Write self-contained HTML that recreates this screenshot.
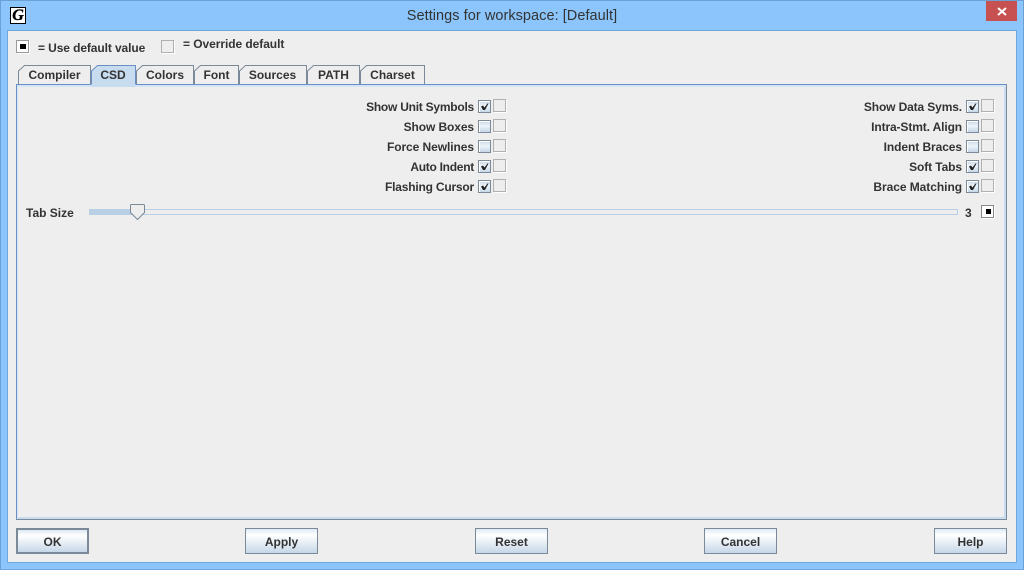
<!DOCTYPE html>
<html><head><meta charset="utf-8"><style>
html,body{margin:0;padding:0}
body{width:1024px;height:570px;position:relative;overflow:hidden;background:#8bc5fb;font:bold 12px "Liberation Sans",sans-serif;color:#333}
div,span{position:absolute;box-sizing:border-box}
.t{white-space:nowrap;line-height:14px;height:14px}
.r{text-align:right;width:200px}
.cb{width:13px;height:13px;border:1px solid #7a8a99;background:linear-gradient(#c6d7e8,#eef3f9 45%,#c6d7e8);box-shadow:inset 1px 1px 0 #fff}
.ov{width:13px;height:13px;border:1px solid #b0b0b0;background:#eee;box-shadow:1px 1px 0 #fff}
.tab{top:65px;height:20px;text-align:center;line-height:20px}
.btn{top:528px;width:73px;height:26px;border:1px solid #7a8a99;background:linear-gradient(#dde8f3,#fff 25%,#c6d7e8);text-align:center;line-height:26px}
</style></head><body>
<div style="left:0;top:0;width:1024px;height:570px;border:1px solid #6c9fd4;border-bottom-color:#6fa8e0"></div>
<div style="left:10px;top:7px;width:16px;height:17px;background:#fff;border:1px solid #000;font:bold italic 16px/15px 'Liberation Serif',serif;color:#000;text-align:center;-webkit-text-stroke:.4px #000">G</div>
<div class="t" style="left:0;width:1024px;top:8px;height:16px;line-height:16px;text-align:center;font-weight:normal;font-size:14.5px;letter-spacing:.05px;color:#333">Settings for workspace: [Default]</div>
<div style="left:986px;top:1px;width:31px;height:20px;background:#c75050"><svg width="31" height="20" style="display:block"><path d="M12 7L20 14M20 7L12 14" stroke="#fff" stroke-width="2"/></svg></div>
<div style="left:7px;top:30px;width:1010px;height:533px;background:#eee;border:1px solid #6ea6de"></div>

<div class="cb" style="left:16px;top:40px;background:#fff;border-color:#999;box-shadow:1px 1px 0 #fff"></div>
<div style="left:20px;top:44px;width:6px;height:5px;background:#000"></div>
<div class="t" style="left:38px;top:41px;letter-spacing:-.1px">= Use default value</div>
<div class="ov" style="left:161px;top:40px"></div>
<div class="t" style="left:183px;top:37px;letter-spacing:-.06px">= Override default</div>

<div style="left:16px;top:84px;width:991px;height:436px;border:1px solid #6a8fc4;border-right-color:#7a8a99;border-bottom-color:#7a8a99;box-shadow:inset 1px 2px 0 #d5e5f5,inset 0 -2px 0 #c8dcf0,inset -2px 0 0 #c8dcf0;background:#eee"></div>

<svg width="1024" height="90" style="position:absolute;left:0;top:0">
<g fill="#eee" stroke="#7a8a99">
<path d="M18.500 84V71L24.500 65.500H90.500V84"/>
<path d="M136.500 84V71L142.500 65.500H193.500V84"/>
<path d="M194.500 84V71L200.500 65.500H238.500V84"/>
<path d="M239.500 84V71L245.500 65.500H306.500V84"/>
<path d="M307.500 84V71L313.500 65.500H359.500V84"/>
<path d="M360.500 84V71L366.500 65.500H424.500V84"/>
</g>
<path d="M91.500 87V71L97.500 65.500H135.500V87Z" fill="#c8dcf0" stroke="none"/>
<path d="M91.500 84V71L97.500 65.500H135.500V84" fill="none" stroke="#6a8fc4"/>
</svg>
<div class="tab" style="left:18px;width:73px">Compiler</div>
<div class="tab" style="left:91px;width:44px">CSD</div>
<div class="tab" style="left:136px;width:58px">Colors</div>
<div class="tab" style="left:194px;width:45px">Font</div>
<div class="tab" style="left:239px;width:67px">Sources</div>
<div class="tab" style="left:307px;width:53px">PATH</div>
<div class="tab" style="left:360px;width:65px">Charset</div>

<div class="t r" style="left:274px;top:100px;letter-spacing:-.24px">Show Unit Symbols</div>
<div class="t r" style="left:274px;top:120px;letter-spacing:-.1px">Show Boxes</div>
<div class="t r" style="left:274px;top:140px;letter-spacing:-.07px">Force Newlines</div>
<div class="t r" style="left:274px;top:160px;letter-spacing:-.27px">Auto Indent</div>
<div class="t r" style="left:274px;top:180px;letter-spacing:-.2px">Flashing Cursor</div>

<div class="cb" style="left:478px;top:100px"></div><div class="ov" style="left:493px;top:99px"></div>
<div class="cb" style="left:478px;top:120px"></div><div class="ov" style="left:493px;top:119px"></div>
<div class="cb" style="left:478px;top:140px"></div><div class="ov" style="left:493px;top:139px"></div>
<div class="cb" style="left:478px;top:160px"></div><div class="ov" style="left:493px;top:159px"></div>
<div class="cb" style="left:478px;top:180px"></div><div class="ov" style="left:493px;top:179px"></div>

<div class="t r" style="left:762px;top:100px;letter-spacing:-.13px">Show Data Syms.</div>
<div class="t r" style="left:762px;top:120px;letter-spacing:-.12px">Intra-Stmt. Align</div>
<div class="t r" style="left:762px;top:140px;letter-spacing:-.08px">Indent Braces</div>
<div class="t r" style="left:762px;top:160px;letter-spacing:-.1px">Soft Tabs</div>
<div class="t r" style="left:762px;top:180px;letter-spacing:-.05px">Brace Matching</div>

<div class="cb" style="left:966px;top:100px"></div><div class="ov" style="left:981px;top:99px"></div>
<div class="cb" style="left:966px;top:120px"></div><div class="ov" style="left:981px;top:119px"></div>
<div class="cb" style="left:966px;top:140px"></div><div class="ov" style="left:981px;top:139px"></div>
<div class="cb" style="left:966px;top:160px"></div><div class="ov" style="left:981px;top:159px"></div>
<div class="cb" style="left:966px;top:180px"></div><div class="ov" style="left:981px;top:179px"></div>

<svg width="1024" height="570" style="position:absolute;left:0;top:0;z-index:3" fill="#222">
<path d="M481 106.500L483 105.500L484.500 107.500L487.500 103.500H488.500L485 110H483Z"/>
<path d="M481 166.500L483 165.500L484.500 167.500L487.500 163.500H488.500L485 170H483Z"/>
<path d="M481 186.500L483 185.500L484.500 187.500L487.500 183.500H488.500L485 190H483Z"/>
<path d="M969 106.500L971 105.500L972.500 107.500L975.500 103.500H976.500L973 110H971Z"/>
<path d="M969 166.500L971 165.500L972.500 167.500L975.500 163.500H976.500L973 170H971Z"/>
<path d="M969 186.500L971 185.500L972.500 187.500L975.500 183.500H976.500L973 190H971Z"/>
</svg>

<div class="t" style="left:26px;top:206px">Tab Size</div>
<div style="left:89px;top:209px;width:869px;height:6px;border:1px solid #b8cfe4;background:#eee"></div>
<div style="left:89px;top:209px;width:42px;height:6px;background:#b8cfe4"></div>
<svg width="16" height="18" style="position:absolute;left:130px;top:203px"><path d="M.5 2.500Q.5 1.500 1.500 1.500H13.500Q14.500 1.500 14.500 2.500V9.500L7.500 16.500L.5 9.500Z" fill="#eee" stroke="#7a8a99"/></svg>
<div class="t" style="left:965px;top:206px">3</div>
<div class="cb" style="left:981px;top:205px;background:#fff;border-color:#888;box-shadow:1px 1px 0 #fff"></div>
<div style="left:986px;top:209px;width:5px;height:5px;background:#000"></div>

<div class="btn" style="left:16px;width:73px;border:2px solid #7a8a99;line-height:24px">OK</div>
<div class="btn" style="left:245px">Apply</div>
<div class="btn" style="left:475px">Reset</div>
<div class="btn" style="left:704px">Cancel</div>
<div class="btn" style="left:934px">Help</div>
</body></html>
